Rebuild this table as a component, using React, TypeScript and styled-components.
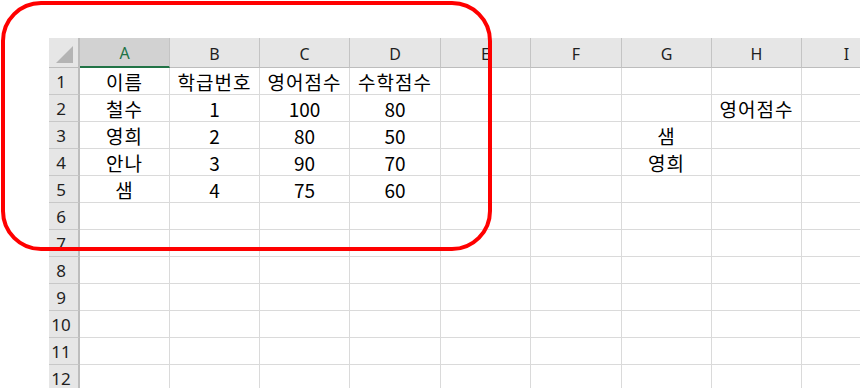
import * as React from "react";
import styled, { createGlobalStyle } from "styled-components";

const GlobalStyle = createGlobalStyle`
  html, body {
    margin: 0;
    padding: 0;
    background: #ffffff;
    overflow: hidden;
  }
`;

const COLS = ["A", "B", "C", "D", "E", "F", "G", "H", "I"];
const WIDTHS = [90, 90, 90, 91, 90, 91, 90, 90, 90];

// sparse cell data, keyed "row:col"
const cells: { [key: string]: string } = {
  "1:A": "이름", "1:B": "학급번호", "1:C": "영어점수", "1:D": "수학점수",
  "2:A": "철수", "2:B": "1", "2:C": "100", "2:D": "80", "2:H": "영어점수",
  "3:A": "영희", "3:B": "2", "3:C": "80", "3:D": "50", "3:G": "샘",
  "4:A": "안나", "4:B": "3", "4:C": "90", "4:D": "70", "4:G": "영희",
  "5:A": "샘", "5:B": "4", "5:C": "75", "5:D": "60"
};

const isHangul = (s: string) => /[\uac00-\ud7a3]/.test(s);

const Page = styled.div`
  position: relative;
  width: 860px;
  height: 388px;
  overflow: hidden;
  padding: 38px 0 0 49px;
  box-sizing: border-box;
`;

const Sheet = styled.div`
  display: grid;
  grid-template-columns: 31px ${WIDTHS.map((w) => w + "px").join(" ")};
  grid-template-rows: 30px repeat(12, 27px);
`;

const Corner = styled.div`
  background: #e6e6e6;
  border-right: 2px solid #bdbdbd;
  border-bottom: 1px solid #bdbdbd;
  box-sizing: border-box;
  position: relative;
`;

const CornerTriangle = styled.div`
  position: absolute;
  right: 5px;
  bottom: 4px;
  width: 0;
  height: 0;
  border-left: 17px solid transparent;
  border-bottom: 17px solid #b4b4b4;
`;

const ColHeader = styled.div<{ $active?: boolean }>`
  display: flex;
  align-items: center;
  justify-content: center;
  padding-top: 2px;
  box-sizing: border-box;
  background: ${(p) => (p.$active ? "#d2d2d2" : "#e6e6e6")};
  border-right: 1px solid #c4c4c4;
  border-bottom: ${(p) => (p.$active ? "2px solid #217346" : "1px solid #bdbdbd")};
  color: ${(p) => (p.$active ? "#217346" : "#1f1f1f")};
  font-family: "Noto Sans", "Liberation Sans", sans-serif;
  font-size: 16px;
`;

const RowHeader = styled.div`
  display: flex;
  align-items: center;
  justify-content: center;
  padding-right: 5px;
  box-sizing: border-box;
  background: #e6e6e6;
  border-right: 2px solid #bdbdbd;
  border-bottom: 1px solid #c8c8c8;
  color: #1f1f1f;
  font-family: "Noto Sans", "Liberation Sans", sans-serif;
  font-size: 17px;
`;

const Cell = styled.div<{ $hangul?: boolean }>`
  display: flex;
  align-items: center;
  justify-content: center;
  box-sizing: border-box;
  border-right: 1px solid #dadada;
  border-bottom: 1px solid #dadada;
  color: #000000;
  font-family: "Noto Sans CJK KR", "Noto Sans", sans-serif;
  font-size: 19px;
  white-space: nowrap;
  letter-spacing: ${(p) => (p.$hangul ? "1px" : "0")};
`;

const Highlight = styled.div`
  position: absolute;
  left: 1px;
  top: 1px;
  width: 491px;
  height: 250px;
  border: 4px solid #ff0000;
  border-radius: 40px;
  box-sizing: border-box;
  pointer-events: none;
`;

export default function App() {
  const rows = Array.from({ length: 12 }, (_, i) => i + 1);
  return (
    <Page>
      <GlobalStyle />
      <Sheet>
        <Corner>
          <CornerTriangle />
        </Corner>
        {COLS.map((c) => (
          <ColHeader key={c} $active={c === "A"}>
            {c}
          </ColHeader>
        ))}
        {rows.map((r) => (
          <React.Fragment key={r}>
            <RowHeader>{r}</RowHeader>
            {COLS.map((c) => {
              const v = cells[r + ":" + c] || "";
              return (
                <Cell key={c} $hangul={isHangul(v)}>
                  {v}
                </Cell>
              );
            })}
          </React.Fragment>
        ))}
      </Sheet>
      <Highlight />
    </Page>
  );
}
